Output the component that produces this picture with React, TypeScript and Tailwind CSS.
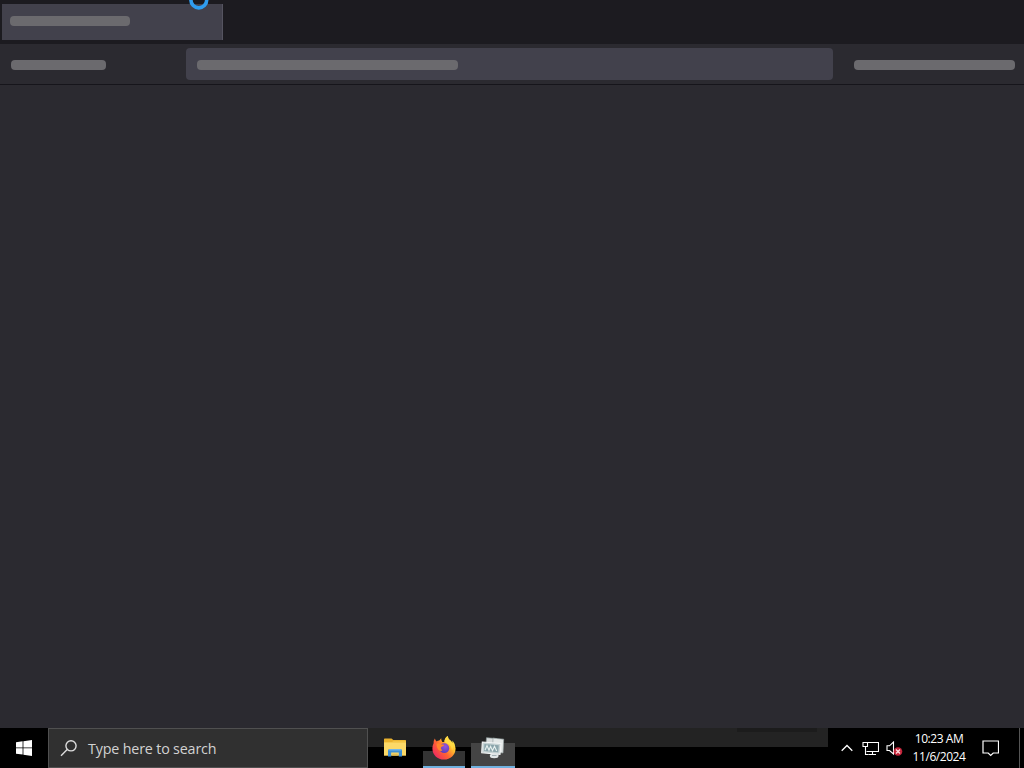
import React from 'react';

function BusyCursor() {
  return (
    <svg className="absolute left-[187px] top-0" width="24" height="12" viewBox="0 0 24 12">
      <circle cx="11.8" cy="0" r="7.9" fill="none" stroke="#2f9df0" strokeWidth="3.6" />
    </svg>
  );
}

function WindowsIcon() {
  return (
    <svg width="16" height="16" viewBox="0 0 16 16" fill="#fff">
      <path d="M0 2.2 6.6 1.3V7.5H0zM7.4 1.2 16 0V7.5H7.4zM0 8.3H6.6V14.6L0 13.7zM7.4 8.3H16V16L7.4 14.8z" />
    </svg>
  );
}

function SearchIcon() {
  return (
    <svg width="18" height="18" viewBox="0 0 18 18" fill="none" stroke="#dedede" strokeWidth="1.4">
      <circle cx="11" cy="6.8" r="5.1" />
      <path d="M7.2 10.6 1 16.8" />
    </svg>
  );
}

function FolderIcon() {
  return (
    <svg width="22" height="19" viewBox="0 0 22 19">
      <path d="M0 1.2Q0 .5.7.5H7.5L9.3 2H21.3Q22 2 22 2.7V17.5H0z" fill="#e9b22e" />
      <path d="M0 4.2H22V17.5H0z" fill="#fbd968" />
      <path d="M0 4H8L9.5 2.8H22V4.5H0z" fill="#f3c545" />
      <path d="M4 18.5V12.5Q4 11 5.5 11H16.5Q18 11 18 12.5V18.5H14.8V14.6H7.2V18.5z" fill="#3d8fd6" />
      <path d="M5.5 11H16.5L17.6 12.5H4.4z" fill="#71b6ea" />
      <path d="M8.2 15.6H13.8V17.5H8.2z" fill="#dfbd58" />
    </svg>
  );
}

function FirefoxIcon() {
  return (
    <svg width="24" height="24" viewBox="0 0 24 24">
      <defs>
        <linearGradient id="fox" x1="0.9" y1="0.2" x2="0.15" y2="0.85">
          <stop offset="0" stopColor="#fff04a" />
          <stop offset="0.3" stopColor="#ffb52d" />
          <stop offset="0.6" stopColor="#ff6432" />
          <stop offset="1" stopColor="#f0305c" />
        </linearGradient>
        <radialGradient id="globe" cx="0.6" cy="0.3" r="0.8">
          <stop offset="0" stopColor="#9655dc" />
          <stop offset="1" stopColor="#523ab6" />
        </radialGradient>
      </defs>
      <path
        d="M2.8 2.6Q3.5 4.8 4.7 5.6Q5.5 4.8 7.3 4.6L9.2 2.3Q9.1 4.6 10.3 6L12.5 6Q12.2 2.4 15.6 0Q16 3 18.7 4.8Q19.6 5.6 20.3 7L20.5 4.4Q23.6 8 23.6 12.4C23.6 18.8 18.4 23.6 12 23.6C5.4 23.6.4 18.8.4 12.5Q.4 9.6 1.6 7.2Q1.6 4.4 2.8 2.6z"
        fill="url(#fox)"
      />
      <path d="M15.6 0Q16 3 18.7 4.8C21.2 7 21.6 11 20 14.6Q19.7 9.8 16.8 8.3Q13.2 6.8 12.5 6Q12.2 2.4 15.6 0z" fill="#ffda45" />
      <circle cx="12.3" cy="12.2" r="4.9" fill="url(#globe)" />
      <path d="M4.5 7.6Q7 6.7 8.7 8.2L12.2 8.8Q12 10.2 9.6 10.8L8.8 12.1Q9.4 13.6 10.4 14.6Q8.8 15.2 7.2 14.5Q4.4 12.3 4.5 7.6z" fill="#ff852d" />
    </svg>
  );
}

function MonitorIcon() {
  return (
    <svg width="24" height="22" viewBox="0 0 24 22">
      <path d="M5.5.7 15.7 1.6 15 14.5 4.5 13z" fill="#d9dddd" stroke="#8d9999" strokeWidth=".7" />
      <path d="M12 1.2 22.7 2.2 22 16 11.5 14.8z" fill="#e3e7e6" stroke="#98a4a4" strokeWidth=".7" />
      <path d="M1.3 5 20 6.5 19 17.3.7 15.8z" fill="#c6d2d3" stroke="#f3f5f5" strokeWidth="1.1" />
      <path d="M3.4 7 17.8 8.2 17.2 15.2 3.1 14z" fill="#8ba5ab" />
      <path d="M4 13.2 6 8.6 8 13.3 9.6 9.3 11.5 13.6 13.5 9.3 15.7 14" fill="none" stroke="#e7f0ef" strokeWidth="1.1" />
      <ellipse cx="13.2" cy="18.8" rx="4.4" ry="2.5" fill="#e1e6e7" />
      <path d="M11 18.5H15.5" stroke="#91a1a7" strokeWidth=".8" />
    </svg>
  );
}

function NetworkIcon() {
  return (
    <svg width="17" height="15" viewBox="0 0 17 15" fill="none" stroke="#fff" strokeWidth="1.1">
      <path d="M6 1.5H16.5V10.5H4.5M10.5 10.5V13.5M6.5 13.5H14" />
      <path d="M1 1.5H5.5V5.5H1zM3.5 5.5V13.5H6.5" />
    </svg>
  );
}

function VolumeIcon() {
  return (
    <svg width="17" height="15" viewBox="0 0 17 15">
      <path d="M1 4.8H3.5L7.5 1V13L3.5 9.5H1z" fill="none" stroke="#fff" strokeWidth="1.1" />
      <circle cx="12" cy="10.5" r="4.3" fill="#c4243a" />
      <path d="M10 8.5 14 12.5M14 8.5 10 12.5" stroke="#ffdada" strokeWidth="1.4" />
    </svg>
  );
}

function BrowserSkeleton() {
  return (
    <>
      <div className="flex h-11 bg-[#1c1b20] pl-0.5 pt-1">
        <div className="h-9 w-[221px] border-r border-[#555460] bg-[#42414c] pl-2 pt-3">
          <div className="h-2.5 w-[120px] rounded bg-[#6b6a6e]" />
        </div>
      </div>
      <div className="flex h-[41px] items-center border-b border-[#16151b] bg-[#2b2a30] pl-[11px] pr-[9px]">
        <div className="mt-px h-2.5 w-[95px] rounded bg-[#6b6a6e]" />
        <div className="ml-20 flex h-8 w-[647px] items-center rounded-sm bg-[#42414c] pl-[11px]">
          <div className="mt-px h-2.5 w-[261px] rounded bg-[#6b6a6e]" />
        </div>
        <div className="ml-auto mt-px h-2.5 w-[161px] rounded bg-[#6b6a6e]" />
      </div>
    </>
  );
}

function Taskbar() {
  return (
    <div className="flex h-10 bg-black text-white">
      <button className="flex w-12 items-center justify-center">
        <WindowsIcon />
      </button>
      <div className="flex w-80 items-center border border-[#505050] bg-[#303030] pl-[11px]">
        <SearchIcon />
        <span className="ml-[10px] mt-0.5 whitespace-nowrap text-[14.3px] leading-5 tracking-[-0.17px] text-[#d2d2d2]">
          Type here to search
        </span>
      </div>
      <div className="flex h-10 w-[460px] bg-[linear-gradient(#232323_0px,#232323_19px,#000_19px)]">
        <div className="ml-4 mt-[10px] h-[19px] w-[22px]">
          <FolderIcon />
        </div>
        <div className="ml-[17px] h-10 w-[42px] border-b-2 border-[#70b1df] bg-[linear-gradient(transparent_23px,#343434_23px)] pl-[9px] pt-2">
          <FirefoxIcon />
        </div>
        <div className="ml-1.5 h-10 w-11 border-b-2 border-[#70b1df] bg-[linear-gradient(transparent_15px,#444_15px)] pl-[10px] pt-[9px]">
          <MonitorIcon />
        </div>
        <div className="ml-[222px] h-1 w-[80px] bg-[#1c1c1c]" />
      </div>
      <div className="flex flex-1 items-center">
        <svg className="ml-[13px] shrink-0" width="12" height="8" viewBox="0 0 12 8" fill="none" stroke="#fff" strokeWidth="1.3">
          <path d="M.7 6.8 6 1.5 11.3 6.8" />
        </svg>
        <div className="ml-[9px] shrink-0">
          <NetworkIcon />
        </div>
        <div className="ml-[7px] shrink-0">
          <VolumeIcon />
        </div>
        <div className="ml-2 w-[56px] shrink-0 whitespace-nowrap text-center text-[12px] leading-[18px] tracking-[-0.45px]">
          <div>10:23 AM</div>
          <div>11/6/2024</div>
        </div>
        <svg className="ml-[15px] shrink-0" width="17" height="17" viewBox="0 0 17 17" fill="none" stroke="#fff" strokeWidth="1.2">
          <path d="M1 1H16.5V13H11.2L8.7 15.5 6.2 13H1z" />
        </svg>
        <div className="ml-auto h-10 w-[5px] shrink-0 border-l border-[#555]" />
      </div>
    </div>
  );
}

export default function App() {
  return (
    <div className="relative flex h-screen w-screen flex-col overflow-hidden bg-[#2b2a30] font-['Open_Sans',sans-serif]">
      <BrowserSkeleton />
      <div className="flex-1" />
      <Taskbar />
      <BusyCursor />
    </div>
  );
}
